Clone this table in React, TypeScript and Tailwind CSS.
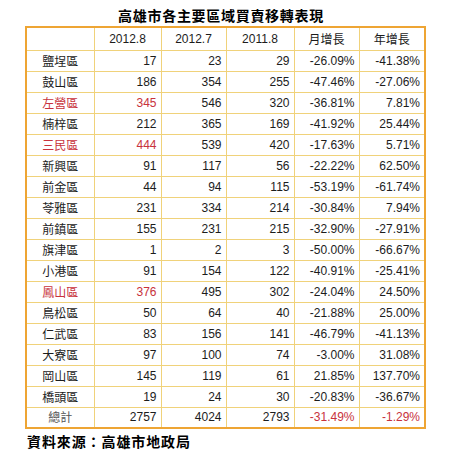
import React from 'react';

interface Row {
  name: string;
  a: string;
  b: string;
  c: string;
  m: string;
  y: string;
  hot?: boolean;
}

const rows: Row[] = [
  { name: '鹽埕區', a: '17', b: '23', c: '29', m: '-26.09%', y: '-41.38%' },
  { name: '鼓山區', a: '186', b: '354', c: '255', m: '-47.46%', y: '-27.06%' },
  { name: '左營區', a: '345', b: '546', c: '320', m: '-36.81%', y: '7.81%', hot: true },
  { name: '楠梓區', a: '212', b: '365', c: '169', m: '-41.92%', y: '25.44%' },
  { name: '三民區', a: '444', b: '539', c: '420', m: '-17.63%', y: '5.71%', hot: true },
  { name: '新興區', a: '91', b: '117', c: '56', m: '-22.22%', y: '62.50%' },
  { name: '前金區', a: '44', b: '94', c: '115', m: '-53.19%', y: '-61.74%' },
  { name: '苓雅區', a: '231', b: '334', c: '214', m: '-30.84%', y: '7.94%' },
  { name: '前鎮區', a: '155', b: '231', c: '215', m: '-32.90%', y: '-27.91%' },
  { name: '旗津區', a: '1', b: '2', c: '3', m: '-50.00%', y: '-66.67%' },
  { name: '小港區', a: '91', b: '154', c: '122', m: '-40.91%', y: '-25.41%' },
  { name: '鳳山區', a: '376', b: '495', c: '302', m: '-24.04%', y: '24.50%', hot: true },
  { name: '鳥松區', a: '50', b: '64', c: '40', m: '-21.88%', y: '25.00%' },
  { name: '仁武區', a: '83', b: '156', c: '141', m: '-46.79%', y: '-41.13%' },
  { name: '大寮區', a: '97', b: '100', c: '74', m: '-3.00%', y: '31.08%' },
  { name: '岡山區', a: '145', b: '119', c: '61', m: '21.85%', y: '137.70%' },
  { name: '橋頭區', a: '19', b: '24', c: '30', m: '-20.83%', y: '-36.67%' },
];

const cell = 'border border-[#f0d27a] px-1 leading-none';
const num = `${cell} text-right`;
const cjk = { fontFamily: '"Noto Sans CJK TC", sans-serif' };

export default function App() {
  return (
    <div className="w-[450px] h-[456px] bg-white text-[#1c1c1c]" style={{ fontFamily: '"Liberation Sans", Arial, sans-serif' }}>
      <div className="pt-[8px] h-[26px] text-center text-[14px] font-bold tracking-[0.7px] leading-none text-black pr-[8px]" style={cjk}>
        高雄市各主要區域買賣移轉表現
      </div>
      <table className="ml-[25px] border-collapse border-2 border-[#eea534] text-[12px] table-fixed w-[399px]">
        <colgroup>
          <col className="w-[68px]" />
          <col className="w-[67px]" />
          <col className="w-[65px]" />
          <col className="w-[68px]" />
          <col className="w-[65px]" />
          <col className="w-[66px]" />
        </colgroup>
        <thead>
          <tr className="h-[23px]">
            <th className={cell}></th>
            <th className={`${cell} font-normal`}>2012.8</th>
            <th className={`${cell} font-normal`}>2012.7</th>
            <th className={`${cell} font-normal`}>2011.8</th>
            <th className={`${cell} font-normal`} style={cjk}>月增長</th>
            <th className={`${cell} font-normal`} style={cjk}>年增長</th>
          </tr>
        </thead>
        <tbody>
          {rows.map((r) => (
            <tr key={r.name} className="h-[21px]">
              <td className={`${cell} text-center ${r.hot ? 'text-[#c8323c]' : ''}`} style={cjk}>{r.name}</td>
              <td className={`${num} ${r.hot ? 'text-[#c8323c]' : ''}`}>{r.a}</td>
              <td className={num}>{r.b}</td>
              <td className={num}>{r.c}</td>
              <td className={num}>{r.m}</td>
              <td className={num}>{r.y}</td>
            </tr>
          ))}
          <tr className="h-[21px]">
            <td className={`${cell} text-center text-[#555]`} style={cjk}>總計</td>
            <td className={num}>2757</td>
            <td className={num}>4024</td>
            <td className={num}>2793</td>
            <td className={`${num} text-[#c8323c]`}>-31.49%</td>
            <td className={`${num} text-[#c8323c]`}>-1.29%</td>
          </tr>
        </tbody>
      </table>
      <div className="pl-[27px] pt-[5px] text-[14px] font-bold tracking-[0.9px] leading-none text-black" style={cjk}>
        資料來源：高雄市地政局
      </div>
    </div>
  );
}
